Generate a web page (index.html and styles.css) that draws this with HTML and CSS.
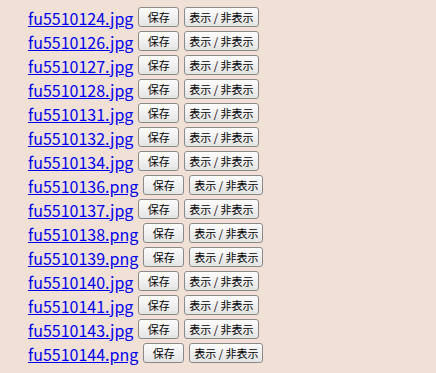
FILE: index.html
```html
<!DOCTYPE html>
<html>
<head>
<meta charset="utf-8">
<link rel="stylesheet" href="styles.css">
</head>
<body>
<div class="list">
  <div class="row"><a class="file" href="#">fu5510124.jpg</a><button class="btn save">保存</button><button class="btn toggle">表示 / 非表示</button></div>
  <div class="row"><a class="file" href="#">fu5510126.jpg</a><button class="btn save">保存</button><button class="btn toggle">表示 / 非表示</button></div>
  <div class="row"><a class="file" href="#">fu5510127.jpg</a><button class="btn save">保存</button><button class="btn toggle">表示 / 非表示</button></div>
  <div class="row"><a class="file" href="#">fu5510128.jpg</a><button class="btn save">保存</button><button class="btn toggle">表示 / 非表示</button></div>
  <div class="row"><a class="file" href="#">fu5510131.jpg</a><button class="btn save">保存</button><button class="btn toggle">表示 / 非表示</button></div>
  <div class="row"><a class="file" href="#">fu5510132.jpg</a><button class="btn save">保存</button><button class="btn toggle">表示 / 非表示</button></div>
  <div class="row"><a class="file" href="#">fu5510134.jpg</a><button class="btn save">保存</button><button class="btn toggle">表示 / 非表示</button></div>
  <div class="row"><a class="file" href="#">fu5510136.png</a><button class="btn save">保存</button><button class="btn toggle">表示 / 非表示</button></div>
  <div class="row"><a class="file" href="#">fu5510137.jpg</a><button class="btn save">保存</button><button class="btn toggle">表示 / 非表示</button></div>
  <div class="row"><a class="file" href="#">fu5510138.png</a><button class="btn save">保存</button><button class="btn toggle">表示 / 非表示</button></div>
  <div class="row"><a class="file" href="#">fu5510139.png</a><button class="btn save">保存</button><button class="btn toggle">表示 / 非表示</button></div>
  <div class="row"><a class="file" href="#">fu5510140.jpg</a><button class="btn save">保存</button><button class="btn toggle">表示 / 非表示</button></div>
  <div class="row"><a class="file" href="#">fu5510141.jpg</a><button class="btn save">保存</button><button class="btn toggle">表示 / 非表示</button></div>
  <div class="row"><a class="file" href="#">fu5510143.jpg</a><button class="btn save">保存</button><button class="btn toggle">表示 / 非表示</button></div>
  <div class="row"><a class="file" href="#">fu5510144.png</a><button class="btn save">保存</button><button class="btn toggle">表示 / 非表示</button></div>
</div>
</body>
</html>
```
FILE: styles.css
```css
html, body {
  margin: 0;
  background: #f0e0d6;
}
body {
  font-family: "Noto Sans CJK JP", sans-serif;
}
.list {
  padding: 5px 0 0 28px;
}
.row {
  display: flex;
  align-items: center;
  height: 24px;
  gap: 5px;
}
.file {
  color: #0000ee;
  font-size: 16px;
  line-height: 20px;
  text-decoration: underline;
  margin-top: 2px;
}
.btn {
  font-family: "Noto Sans CJK JP", sans-serif;
  font-size: 11px;
  height: 20px;
  line-height: 18px;
  color: #000;
  background: linear-gradient(#fdfdfd, #e4e4e4);
  border: 1px solid #8a8a8a;
  border-radius: 3px;
  margin: 0;
}
.save {
  width: 41px;
  padding: 0;
}
.toggle {
  padding: 0 4px;
}
```
